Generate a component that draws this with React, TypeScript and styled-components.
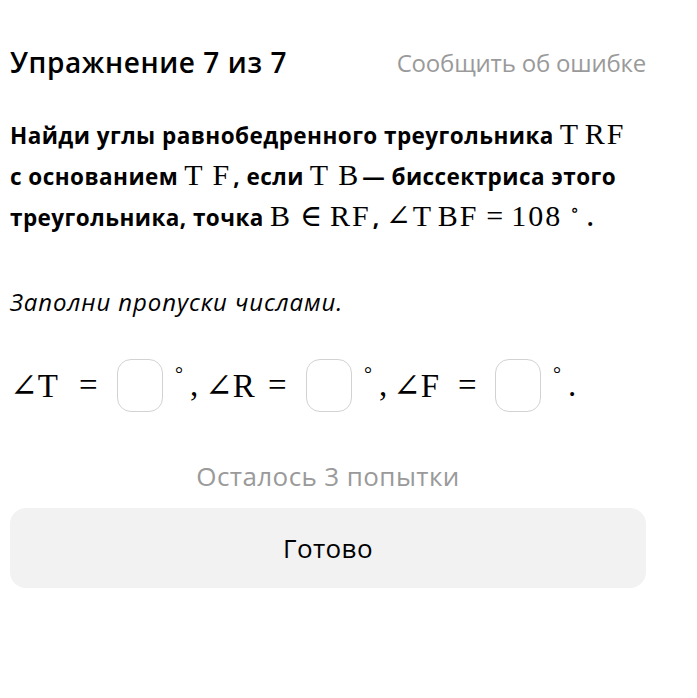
import React, { FC } from 'react'
import styled, { createGlobalStyle } from 'styled-components'

const GlobalStyle = createGlobalStyle`
  html, body {
    margin: 0;
    padding: 0;
    background: #ffffff;
  }
  body {
    font-family: "Open Sans", "Noto Sans", sans-serif;
    color: #000;
  }
`

const Page = styled.div`
  width: 636px;
  padding: 42px 0 0 10px;
  display: flex;
  flex-direction: column;
`

const Header = styled.div`
  display: flex;
  justify-content: space-between;
  align-items: center;
  height: 40px;
`

const Title = styled.h1`
  margin: 0;
  font-size: 28px;
  font-weight: 600;
  letter-spacing: 0.6px;
`

const ReportLink = styled.a`
  font-size: 24px;
  color: #9a9a9a;
  letter-spacing: -0.2px;
  cursor: pointer;
`

const Task = styled.p`
  margin: 32px 0 0;
  font-size: 22.5px;
  font-weight: 700;
  line-height: 39px;
  letter-spacing: 0.45px;
  white-space: nowrap;
`

const M = styled.span<{ $end?: number }>`
  font-family: "Liberation Serif", "DejaVu Serif", serif;
  font-weight: 400;
  font-size: 30px;
  letter-spacing: 2px;
  margin: 0 ${(p) => p.$end ?? 2}px 0 6px;
`

const Rel = styled.span`
  margin: 0 8px;
  letter-spacing: 0;
`

const Sup = styled.sup`
  font-size: 18px;
  margin-left: 8px;
  vertical-align: 10px;
  line-height: 0;
`

const Hint = styled.p`
  margin: 48px 0 0;
  font-size: 24px;
  font-style: italic;
  letter-spacing: 0.9px;
`

const Equation = styled.div`
  margin-top: 40px;
  display: flex;
  align-items: center;
  font-family: "Liberation Serif", "DejaVu Serif", serif;
  font-size: 33px;
  height: 54px;
`

const Sym = styled.span<{ $w: number }>`
  width: ${(p) => p.$w}px;
  flex: none;
  white-space: pre;
`

const Degree = styled.span`
  width: 15px;
  margin-left: 12px;
  font-size: 20px;
  align-self: flex-start;
  margin-top: 5px;
`

const Blank = styled.input`
  flex: none;
  width: 46px;
  height: 53px;
  box-sizing: border-box;
  border: 1.5px solid #d2d2d2;
  border-radius: 14px;
  background: #fff;
  outline: none;
  padding: 0;
`

const Attempts = styled.div`
  margin-top: 46px;
  text-align: center;
  font-size: 26px;
  color: #9a9a9a;
  letter-spacing: 0.4px;
`

const DoneButton = styled.button`
  margin-top: 14px;
  height: 80px;
  width: 100%;
  border: none;
  border-radius: 16px;
  background: #f2f2f2;
  font-family: "Open Sans", "Noto Sans", sans-serif;
  font-size: 26px;
  letter-spacing: 0.4px;
  color: #000;
  cursor: pointer;
`

const App: FC = () => (
    <>
        <GlobalStyle />
        <Page>
            <Header>
                <Title>Упражнение 7 из 7</Title>
                <ReportLink>Сообщить об ошибке</ReportLink>
            </Header>
            <Task>
                Найди углы равнобедренного треугольника<M>T&#8202;RF</M>
                <br />
                с основанием<M>T&thinsp;F</M>, если<M>T&thinsp;B</M>— биссектриса этого
                <br />
                треугольника, точка<M>B<Rel>∈</Rel>RF</M>,<M $end={6}>∠T&#8202;BF<Rel>=</Rel>108<Sup>∘</Sup></M>.
            </Task>
            <Hint>Заполни пропуски числами.</Hint>
            <Equation>
                <Sym $w={69}>∠T</Sym>
                <Sym $w={38}>=</Sym>
                <Blank />
                <Degree>°</Degree>
                <Sym $w={15}>,</Sym>
                <Sym $w={63}>∠R</Sym>
                <Sym $w={38}>=</Sym>
                <Blank />
                <Degree>°</Degree>
                <Sym $w={14}>,</Sym>
                <Sym $w={65}>∠F</Sym>
                <Sym $w={37}>=</Sym>
                <Blank />
                <Degree>°</Degree>
                <Sym $w={14}>.</Sym>
            </Equation>
            <Attempts>Осталось 3 попытки</Attempts>
            <DoneButton>Готово</DoneButton>
        </Page>
    </>
)

export default App
